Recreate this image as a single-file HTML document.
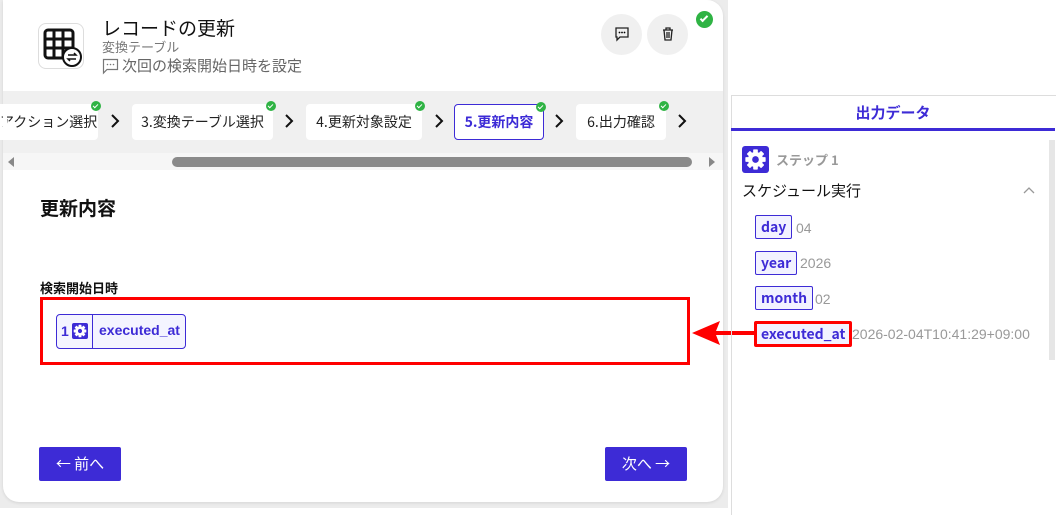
<!DOCTYPE html>
<html><head><meta charset="utf-8"><style>
*{box-sizing:border-box;margin:0;padding:0}
body{width:1060px;height:508px;background:#fff;font-family:"Liberation Sans","Noto Sans CJK JP",sans-serif;position:relative;overflow:hidden}
.bg{position:absolute;left:0;top:0;width:728px;height:508px;background:#ececec}
.card{position:absolute;left:3px;top:0;width:720px;height:502px;background:#fff;border-radius:16px;border-top-left-radius:0;box-shadow:0 1px 3px rgba(0,0,0,.1)}
.abs{position:absolute}
.step{position:absolute;top:104px;height:36px;background:#fff;border-radius:4px;font-size:14px;color:#222;line-height:36px;text-align:center;font-family:"Noto Sans CJK JP",sans-serif;white-space:nowrap}
.chk{position:absolute;width:10px;height:10px;border-radius:50%;background:#2fb344;top:-3px;right:-3px}
.chk:after{content:"";position:absolute;left:3px;top:1.5px;width:2px;height:4px;border:solid #fff;border-width:0 1.3px 1.3px 0;transform:rotate(45deg)}
.chev{position:absolute;top:113px}
.tag{position:absolute;border:1px solid #3d2bd6;background:#f2f2ff;color:#3d2bd6;font-weight:bold;font-size:14px;height:24px;line-height:22px;padding:0 5px;border-radius:2px;font-family:"Noto Sans CJK JP",sans-serif}
.val{position:absolute;color:#999;font-size:14px}
.btn{position:absolute;top:447px;height:34px;background:#3d2bd6;color:#fff;font-size:15px;line-height:34px;text-align:center;border-radius:2px;font-family:"Noto Sans CJK JP",sans-serif}
</style></head><body>
<svg width="0" height="0" style="position:absolute"><defs>
<g id="gear"><g fill="#fff"><rect x="-1.6" y="-7" width="3.2" height="14" rx=".5"/><rect x="-1.6" y="-7" width="3.2" height="14" rx=".5" transform="rotate(45)"/><rect x="-1.6" y="-7" width="3.2" height="14" rx=".5" transform="rotate(90)"/><rect x="-1.6" y="-7" width="3.2" height="14" rx=".5" transform="rotate(135)"/><circle r="5.2"/></g><circle r="2.3" fill="#3d2bd6"/></g>
</defs></svg>
<div class="bg"></div>
<div class="card"></div>
<div class="abs" style="left:38px;top:23px;width:46px;height:46px;border:1px solid #ddd;border-radius:8px;background:#fff">
<svg width="46" height="46" viewBox="0 0 46 46"><rect x="6" y="6" width="28" height="28" rx="3" fill="none" stroke="#111" stroke-width="3"/><path d="M6 15H34M6 24H34M15 6V34M24 6V34" stroke="#111" stroke-width="3"/><circle cx="33" cy="33" r="9" fill="#fff" stroke="#111" stroke-width="2"/><path d="M29 31h8l-2-2M37 35h-8l2 2" stroke="#111" stroke-width="1.5" fill="none"/></svg></div>
<div class="abs" style="left:102px;top:14px;font-size:19px;color:#111;font-family:'Noto Sans CJK JP',sans-serif">レコードの更新</div>
<div class="abs" style="left:102px;top:37px;font-size:13px;color:#777;font-family:'Noto Sans CJK JP',sans-serif">変換テーブル</div>
<svg class="abs" style="left:102px;top:58px" width="17" height="17" viewBox="0 0 17 17"><path d="M1.5 1.5h14v10H5l-3.5 3.5z" fill="none" stroke="#777" stroke-width="1.2"/><circle cx="5.5" cy="6.5" r=".8" fill="#777"/><circle cx="8.5" cy="6.5" r=".8" fill="#777"/><circle cx="11.5" cy="6.5" r=".8" fill="#777"/></svg>
<div class="abs" style="left:122px;top:55px;font-size:15px;color:#666;font-family:'Noto Sans CJK JP',sans-serif">次回の検索開始日時を設定</div>
<div class="abs" style="left:601px;top:14px;width:41px;height:41px;border-radius:50%;background:#f0f0f0;text-align:center">
<svg width="16" height="16" viewBox="0 0 16 16" style="margin-top:12px"><path d="M2 2h12v9H6l-3 3v-3H2z" fill="none" stroke="#222" stroke-width="1.3"/><circle cx="5.5" cy="6.5" r=".9"/><circle cx="8" cy="6.5" r=".9"/><circle cx="10.5" cy="6.5" r=".9"/></svg></div>
<div class="abs" style="left:647px;top:14px;width:41px;height:41px;border-radius:50%;background:#f0f0f0;text-align:center">
<svg width="16" height="16" viewBox="0 0 16 16" style="margin-top:12px"><path d="M3 4h10M6 4V2h4v2M4 4l1 10h6l1-10M7 6v6M9 6v6" fill="none" stroke="#222" stroke-width="1.3"/></svg></div>
<div class="abs" style="left:696px;top:11px;width:17px;height:17px;border-radius:50%;background:#2fb344"><div style="position:absolute;left:6px;top:3px;width:4px;height:8px;border:solid #fff;border-width:0 2px 2px 0;transform:rotate(45deg)"></div></div>
<div class="abs" style="left:3px;top:91px;width:720px;height:62px;background:#f0f0f0"></div>
<div class="step" style="left:0;width:98px;text-align:right;padding-right:11px;border-radius:0 4px 4px 0;overflow:visible"><span style="display:inline-block">アクション選択</span><div class="chk"></div></div>
<div class="abs" style="left:3px;top:104px;width:4px;height:36px;background:#fff"></div>
<svg class="chev" style="left:110px" width="10" height="16" viewBox="0 0 10 16"><path d="M2 2l6 6-6 6" fill="none" stroke="#111" stroke-width="2"/></svg>
<div class="step" style="left:132px;width:141px">3.変換テーブル選択<div class="chk"></div></div>
<svg class="chev" style="left:284px" width="10" height="16" viewBox="0 0 10 16"><path d="M2 2l6 6-6 6" fill="none" stroke="#111" stroke-width="2"/></svg>
<div class="step" style="left:306px;width:116px">4.更新対象設定<div class="chk"></div></div>
<svg class="chev" style="left:434px" width="10" height="16" viewBox="0 0 10 16"><path d="M2 2l6 6-6 6" fill="none" stroke="#111" stroke-width="2"/></svg>
<div class="step" style="left:454px;width:90px;border:1px solid #3d2bd6;color:#3d2bd6;font-weight:bold;line-height:34px">5.更新内容<div class="chk"></div></div>
<svg class="chev" style="left:554px" width="10" height="16" viewBox="0 0 10 16"><path d="M2 2l6 6-6 6" fill="none" stroke="#111" stroke-width="2"/></svg>
<div class="step" style="left:576px;width:90px">6.出力確認<div class="chk"></div></div>
<svg class="chev" style="left:677px" width="10" height="16" viewBox="0 0 10 16"><path d="M2 2l6 6-6 6" fill="none" stroke="#111" stroke-width="2"/></svg>
<div class="abs" style="left:3px;top:153px;width:720px;height:17px;background:#f6f6f6"></div>
<div class="abs" style="left:8px;top:157px;width:0;height:0;border-top:5px solid transparent;border-bottom:5px solid transparent;border-right:6px solid #888"></div>
<div class="abs" style="left:172px;top:157px;width:520px;height:10px;border-radius:5px;background:#8a8a8a"></div>
<div class="abs" style="left:709px;top:157px;width:0;height:0;border-top:5px solid transparent;border-bottom:5px solid transparent;border-left:6px solid #888"></div>
<div class="abs" style="left:40px;top:194px;font-size:19px;font-weight:bold;color:#111;font-family:'Noto Sans CJK JP',sans-serif">更新内容</div>
<div class="abs" style="left:40px;top:278px;font-size:13px;font-weight:bold;color:#111;font-family:'Noto Sans CJK JP',sans-serif">検索開始日時</div>
<div class="abs" style="left:40px;top:297px;width:650px;height:68px;border:3px solid #f00"></div>
<div class="abs" style="left:56px;top:314px;width:130px;height:35px;border:1px solid #3d2bd6;border-radius:4px;background:#f4f4ff"></div>
<div class="abs" style="left:61px;top:323px;font-size:14px;color:#3d2bd6;font-weight:bold">1</div>
<svg class="abs" style="left:72px;top:323px" width="16" height="16" viewBox="0 0 16 16"><rect width="16" height="16" rx="2" fill="#3d2bd6"/><use href="#gear" transform="translate(8 8) scale(.9)"/></svg>
<div class="abs" style="left:92px;top:315px;width:1px;height:33px;background:#3d2bd6"></div>
<div class="abs" style="left:99px;top:322px;font-size:14px;color:#3d2bd6;font-weight:bold">executed_at</div>
<div class="btn" style="left:39px;width:82px">← 前へ</div>
<div class="btn" style="left:605px;width:82px">次へ →</div>
<svg class="abs" style="left:690px;top:318px" width="70" height="30" viewBox="0 0 70 30"><path d="M2 15L30 3L26 13H66V17H26L30 27Z" fill="#f00"/></svg>
<div class="abs" style="left:731px;top:95px;width:325px;height:420px;border-left:1px solid #ddd;border-top:1px solid #ddd"></div>
<div class="abs" style="left:731px;top:102px;width:324px;text-align:center;font-size:15px;font-weight:bold;color:#3d2bd6;font-family:'Noto Sans CJK JP',sans-serif">出力データ</div>
<div class="abs" style="left:731px;top:128px;width:324px;height:3px;background:#3d2bd6"></div>
<div class="abs" style="left:1049px;top:140px;width:6px;height:220px;background:#e6e6e6"></div>
<svg class="abs" style="left:742px;top:146px" width="27" height="27" viewBox="0 0 27 27"><rect width="27" height="27" rx="3" fill="#3d2bd6"/><use href="#gear" transform="translate(13.5 13.5) scale(1.45)"/></svg>
<div class="abs" style="left:776px;top:150px;font-size:13px;font-weight:bold;color:#999;font-family:'Noto Sans CJK JP',sans-serif">ステップ 1</div>
<div class="abs" style="left:742px;top:180px;font-size:15px;color:#111;font-family:'Noto Sans CJK JP',sans-serif">スケジュール実行</div>
<svg class="abs" style="left:1023px;top:186px" width="12" height="8" viewBox="0 0 12 8"><path d="M1 7l5-5 5 5" fill="none" stroke="#999" stroke-width="1.3"/></svg>
<div class="tag" style="left:755px;top:215px">day</div><div class="val" style="left:796px;top:220px">04</div>
<div class="tag" style="left:755px;top:251px">year</div><div class="val" style="left:800px;top:255px">2026</div>
<div class="tag" style="left:755px;top:286px">month</div><div class="val" style="left:815px;top:291px">02</div>
<div class="tag" style="left:754px;top:321px;border:3px solid #f00;height:26px;line-height:20px;padding:0 4px">executed_at</div><div class="val" style="left:852px;top:326px">2026-02-04T10:41:29+09:00</div>
</body></html>
